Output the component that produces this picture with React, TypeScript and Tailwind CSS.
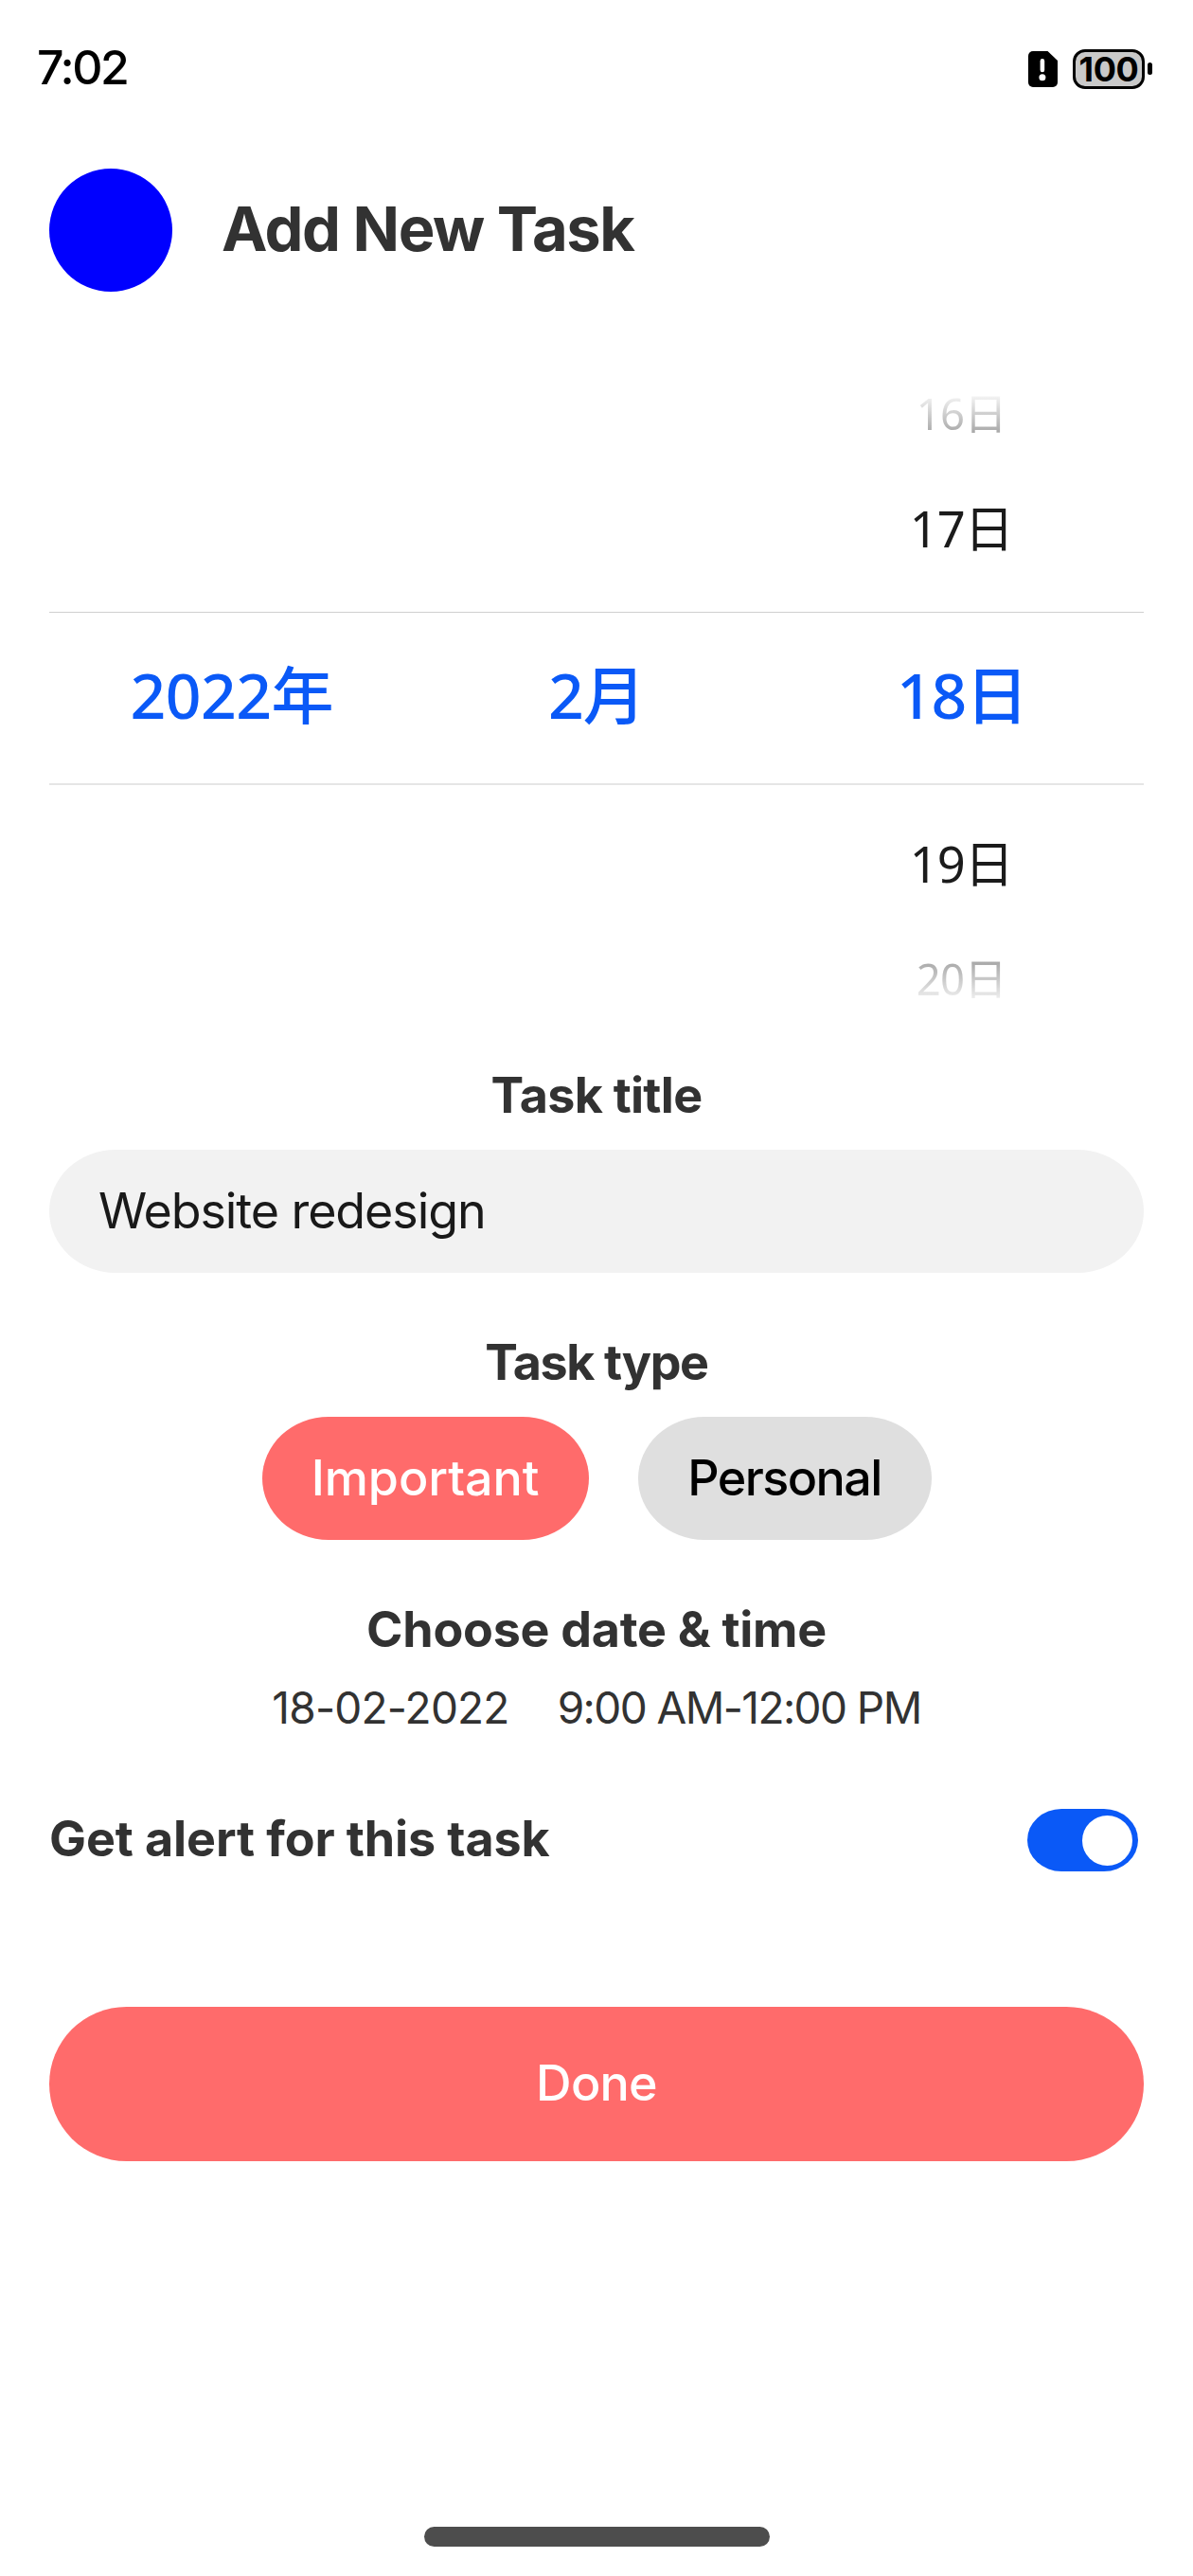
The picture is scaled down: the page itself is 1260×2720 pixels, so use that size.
import type { ReactNode } from 'react';

function AlertCardIcon() {
  return (
    <svg width="31" height="38" viewBox="0 0 31 38" className="block">
      <path d="M5 0H20.5L31 10V33a5 5 0 0 1-5 5H5a5 5 0 0 1-5-5V5a5 5 0 0 1 5-5Z" fill="#000" />
      <path d="M14.9 10.4V20" stroke="#fff" strokeWidth="4.6" strokeLinecap="round" />
      <circle cx="14.9" cy="27.8" r="3.5" fill="#fff" />
    </svg>
  );
}

function Battery() {
  return (
    <div className="flex items-center gap-[3px]">
      <div className="flex h-[42px] w-[76px] items-center justify-center rounded-[13px] border-[3.5px] border-black bg-[#c9c9c9] text-[36px] leading-none font-bold tracking-[-0.4px]">
        100
      </div>
      <div className="h-[13px] w-[5px] rounded-[2.5px] bg-black" />
    </div>
  );
}

function StatusBar() {
  return (
    <div className="flex h-[142px] items-center justify-between pr-[43px] pl-[39px]">
      <span className="text-[50px] leading-none font-medium tracking-[-2.44px]">7:02</span>
      <div className="mt-[3px] flex items-center gap-4">
        <AlertCardIcon />
        <Battery />
      </div>
    </div>
  );
}

const digits = 'font-["Noto_Sans","Noto_Sans_CJK_SC",sans-serif]';

function DatePicker() {
  return (
    <div className={`mt-[97px] text-center ${digits}`}>
      <div className="grid grid-cols-3">
        <div className="col-start-3">
          <div className="h-16 bg-linear-to-b from-white from-12% to-[#929292] bg-clip-text text-[45.5px] leading-[62px] tracking-[-0.8px] text-transparent">16日</div>
          <div className="h-[177px] text-[52.5px] leading-[177px] tracking-[-1.2px] text-[#1b1b1b]">17日</div>
        </div>
      </div>
      <div className="grid h-[183px] grid-cols-3 border-t border-b-2 border-t-[#d0d0d0] border-b-[#e5e5e5] text-[66px] leading-[173px] font-medium text-[#0a59f7]">
        <div className="tracking-[-0.5px]">2022年</div>
        <div className="tracking-[-1px]">2月</div>
        <div className="pl-px tracking-[-1.2px]">18日</div>
      </div>
      <div className="grid grid-cols-3">
        <div className="col-start-3">
          <div className="h-[168px] text-[52.5px] leading-[166px] tracking-[-1.2px] text-[#1b1b1b]">19日</div>
          <div className="h-[74px] bg-linear-to-b from-[#898989] to-white to-90% bg-clip-text text-[45.5px] leading-[72px] tracking-[-0.8px] text-transparent">20日</div>
        </div>
      </div>
    </div>
  );
}

function SectionLabel({ children }: { children: ReactNode }) {
  return <div className="h-15 text-center text-[52px] leading-[62px] font-bold text-[#323232]">{children}</div>;
}

export default function App() {
  return (
    <div className='flex h-[2720px] w-[1260px] flex-col overflow-hidden bg-white font-["Inter","Noto_Sans_CJK_SC",sans-serif] text-black'>
      <StatusBar />
      <main className="flex flex-col px-[52px] pt-9">
        <header className="flex h-[130px] items-center gap-[52px]">
          <button className="size-[130px] rounded-full bg-[#0000ff]" aria-label="Back" />
          <h1 className="-mt-[4px] text-[65px] leading-none font-bold tracking-[-1.45px] text-[#323232]">Add New Task</h1>
        </header>

        <DatePicker />

        <div className="mt-[55px]">
          <SectionLabel>
            <span className="tracking-[-0.73px]">Task title</span>
          </SectionLabel>
          <div className="mt-7 flex h-[130px] items-center rounded-[70px/65px] bg-[#f2f2f2] pl-[52px] text-[52px] leading-none tracking-[-1.09px] text-[#191919]">
            Website redesign
          </div>
        </div>

        <div className="mt-16">
          <SectionLabel>
            <span className="tracking-[-1.4px]">Task type</span>
          </SectionLabel>
          <div className="mt-7 flex justify-center gap-[52px] text-[52px] leading-none font-medium">
            <div className="flex h-[130px] w-[345px] items-center justify-center rounded-[70px/65px] bg-[#ff6b6b] tracking-[-0.08px] text-white">Important</div>
            <div className="flex h-[130px] w-[310px] items-center justify-center rounded-[70px/65px] bg-[#dfdfdf] tracking-[-1.56px]">Personal</div>
          </div>
        </div>

        <div className="mt-16">
          <SectionLabel>
            <span className="tracking-[-0.27px]">Choose date &amp; time</span>
          </SectionLabel>
          <div className="mt-[26px] flex h-[54px] items-center justify-center gap-[51px] text-[46px] leading-none text-[#323232]">
            <span className="tracking-[-0.79px]">18-02-2022</span>
            <span className="tracking-[-1.57px]">9:00 AM-12:00 PM</span>
          </div>
        </div>

        <div className="mt-20 flex h-[66px] items-center justify-between pr-[6px]">
          <span className="-mt-[3px] text-[52px] leading-none font-bold tracking-[-0.1px] text-[#323232]">Get alert for this task</span>
          <div role="switch" aria-checked="true" className="flex h-[66px] w-[117px] items-center justify-end rounded-[36px/33px] bg-[#0a59f7] pr-[6px]">
            <div className="size-[53px] rounded-full bg-white" />
          </div>
        </div>

        <button className="mt-[143px] h-[163px] rounded-full bg-[#ff6b6b] pb-[1px] text-[52px] leading-none font-medium tracking-[-0.74px] text-white">Done</button>
      </main>
      <div className="mx-auto mt-auto mb-[31px] h-[21px] w-[365px] shrink-0 rounded-full bg-[#4d4d4d]" />
    </div>
  );
}
